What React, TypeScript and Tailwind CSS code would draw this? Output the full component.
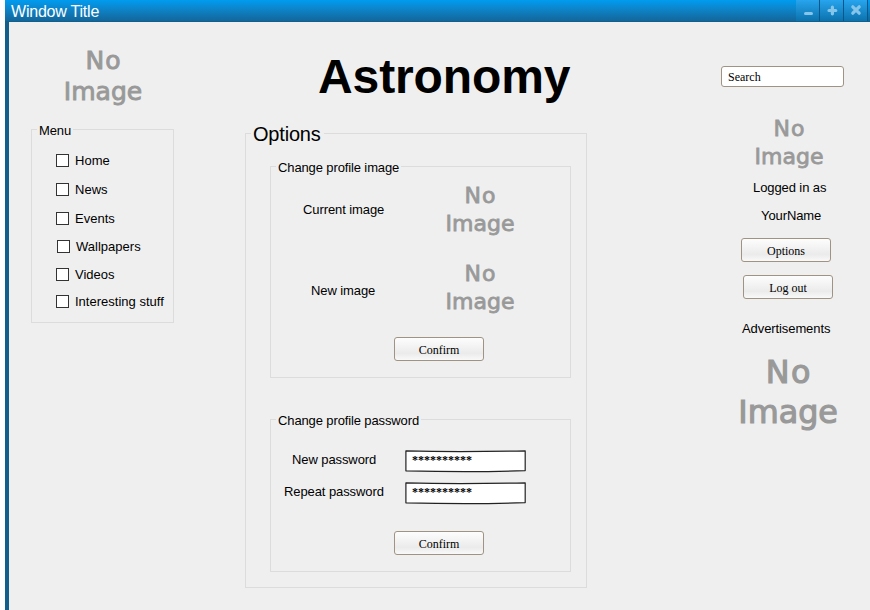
import type { ReactNode } from "react";

function NoImage({ className }: { className: string }) {
  return (
    <svg
      viewBox="0 0 72 56"
      preserveAspectRatio="xMinYMin slice"
      className={`block shrink-0 ${className}`}
      fontFamily='"DejaVu Sans", sans-serif'
      fontSize="22"
      fill="#999999"
      stroke="#999999"
      strokeWidth="0.8"
    >
      <text x="20.6" y="20" letterSpacing="0.9">No</text>
      <text x="1.6" y="47.6" letterSpacing="0">Image</text>
    </svg>
  );
}

function Group({
  title,
  className,
  legendClassName,
  children,
}: {
  title: string;
  className: string;
  legendClassName: string;
  children: ReactNode;
}) {
  return (
    <section className={`flex flex-col items-start border border-[#dcdcdc] ${className}`}>
      <h2 className={`shrink-0 whitespace-nowrap bg-[#efefef] ${legendClassName}`}>{title}</h2>
      {children}
    </section>
  );
}

const smallLegend = "-mt-[7px] ml-[5px] pl-[2px] pr-[2px] h-4 leading-4 tracking-[-0.12px]";

function Button({ label, className = "" }: { label: string; className?: string }) {
  return (
    <button
      className={`flex h-6 w-[90px] shrink-0 items-center justify-center rounded-[3px] border border-[#a09384] bg-linear-to-b from-[#fdfdfd] via-[#ebebeb] via-70% to-[#f9f9f9] pt-[2px] font-['Liberation_Serif',serif] text-[12px] leading-4 ${className}`}
    >
      {label}
    </button>
  );
}

function Label({ children, className = "" }: { children: ReactNode; className?: string }) {
  return (
    <div className={`h-4 shrink-0 whitespace-nowrap leading-4 tracking-[-0.09px] ${className}`}>{children}</div>
  );
}

function MenuItem({ label, className = "" }: { label: string; className?: string }) {
  return (
    <label className={`flex h-[13px] items-center gap-[6px] ${className}`}>
      <span className="size-[13px] shrink-0 border border-[#333333] bg-white" />
      <span className="whitespace-nowrap leading-4 tracking-[0.01px]">{label}</span>
    </label>
  );
}

function PasswordField({ className = "" }: { className?: string }) {
  return (
    <div className={`relative h-[22px] w-[121px] shrink-0 ${className}`}>
      <svg viewBox="0 0 121 22" className="absolute inset-0 h-[22px] w-[121px] overflow-visible">
        <path
          d="M0.9 0.9 C40 1.9 80 1.7 120.2 0.8 L120.2 20.6 C80 22 40 21.8 0.9 20.8 Z"
          fill="#ffffff"
          stroke="#222222"
          strokeWidth="1.2"
          strokeLinejoin="round"
        />
      </svg>
      <span className="relative block pl-[7px] pt-[2px] font-['Liberation_Serif',serif] text-[12px] font-bold leading-4">
        **********
      </span>
    </div>
  );
}

function WindowButton({ children }: { children: ReactNode }) {
  return (
    <div className="h-[21px] w-6 border-r border-[#08578b] bg-linear-to-b from-[#27a5ee] to-[#0b72ad]">
      <svg viewBox="0 0 23 21" className="block h-[21px] w-[23px]" stroke="#86c5ea" strokeWidth="3" strokeLinecap="round">
        {children}
      </svg>
    </div>
  );
}

export default function App() {
  return (
    <div className="flex h-[610px] w-[870px] overflow-hidden bg-white pl-[5px] font-['Liberation_Sans',Arial,sans-serif] text-[13px] text-black">
      <div className="flex w-[865px] flex-col bg-[#125f8b]">
        <header className="flex h-[22px] shrink-0 justify-between border-b border-[#125f8b] bg-linear-to-b from-[#009cf0] to-[#12669a] pl-[6px]">
          <span className="pt-[3px] text-[16px] leading-[18px] tracking-[-0.22px] text-white">Window Title</span>
          <div className="flex pr-[2px]">
            <WindowButton>
              <path d="M9.5 13.5H15.5" />
            </WindowButton>
            <WindowButton>
              <path d="M9 10.5H15.8M12.4 7.2V13.8" strokeWidth="3.2" />
            </WindowButton>
            <WindowButton>
              <path d="M8.8 6.8L15.2 13.2M15.2 6.8L8.8 13.2" strokeWidth="3.2" />
            </WindowButton>
          </div>
        </header>

        <main className="ml-1 flex h-[588px] bg-[#efefef]">
          <aside className="w-[236px] shrink-0 pt-6">
            <NoImage className="ml-[53px] h-[63px] w-[82px]" />
            <Group title="Menu" className="ml-[22px] mt-5 h-[194px] w-[143px]" legendClassName={smallLegend}>
              <MenuItem label="Home" className="ml-6 mt-[15px]" />
              <MenuItem label="News" className="ml-6 mt-4" />
              <MenuItem label="Events" className="ml-6 mt-4" />
              <MenuItem label="Wallpapers" className="ml-[25px] mt-[15px]" />
              <MenuItem label="Videos" className="ml-6 mt-[15px]" />
              <MenuItem label="Interesting stuff" className="ml-6 mt-[14px]" />
            </Group>
          </aside>

          <div className="w-[342px] shrink-0 pt-[27px]">
            <h1 className="ml-[73px] h-14 whitespace-nowrap text-[48px] font-bold leading-[56px] tracking-[-0.1px]">
              Astronomy
            </h1>
            <Group
              title="Options"
              className="mt-[28px] h-[455px] w-[342px]"
              legendClassName="-mt-[12px] ml-[5px] pl-[2px] pr-[3px] h-6 leading-6 text-[20px] font-normal tracking-[-0.2px]"
            >
              <Group title="Change profile image" className="ml-6 mt-5 h-[212px] w-[301px]" legendClassName={smallLegend}>
                <div className="flex h-[60px] items-start pl-8 pt-[7px]">
                  <Label className="mt-[19px] w-[141px]">Current image</Label>
                  <NoImage className="h-[56px] w-[72px]" />
                </div>
                <div className="mt-[18px] flex h-[60px] items-start pl-10 pt-[7px]">
                  <Label className="mt-[22px] w-[133px]">New image</Label>
                  <NoImage className="h-[56px] w-[72px]" />
                </div>
                <Button label="Confirm" className="ml-[123px] mt-[23px]" />
              </Group>
              <Group title="Change profile password" className="ml-6 mt-[41px] h-[153px] w-[301px]" legendClassName={smallLegend}>
                <div className="mt-[21px] flex h-[22px] items-start">
                  <Label className="ml-[21px] mt-[2px] w-[113px]">New password</Label>
                  <PasswordField />
                </div>
                <div className="mt-[10px] flex h-[22px] items-start">
                  <Label className="ml-[13px] mt-[2px] w-[121px]">Repeat password</Label>
                  <PasswordField />
                </div>
                <Button label="Confirm" className="ml-[123px] mt-[27px]" />
              </Group>
            </Group>
          </div>

          <aside className="flex flex-1 flex-col items-start pt-[44px]">
            <div className="ml-[134px] flex h-[21px] w-[123px] shrink-0 items-center rounded-[3px] border border-[#a09384] bg-white pl-[6px] pt-px font-['Liberation_Serif',serif] text-[12px] leading-4">
              Search
            </div>
            <NoImage className="ml-[166px] mt-[29px] h-[56px] w-[72px]" />
            <Label className="ml-[166px] mt-[8px]">Logged in as</Label>
            <Label className="ml-[174px] mt-3">YourName</Label>
            <Button label="Options" className="ml-[154px] mt-[14px]" />
            <Button label="Log out" className="ml-[156px] mt-[13px]" />
            <Label className="ml-[155px] mt-[22px]">Advertisements</Label>
            <NoImage className="ml-[149px] mt-[17px] h-[81px] w-[103px]" />
          </aside>
        </main>
      </div>
    </div>
  );
}
